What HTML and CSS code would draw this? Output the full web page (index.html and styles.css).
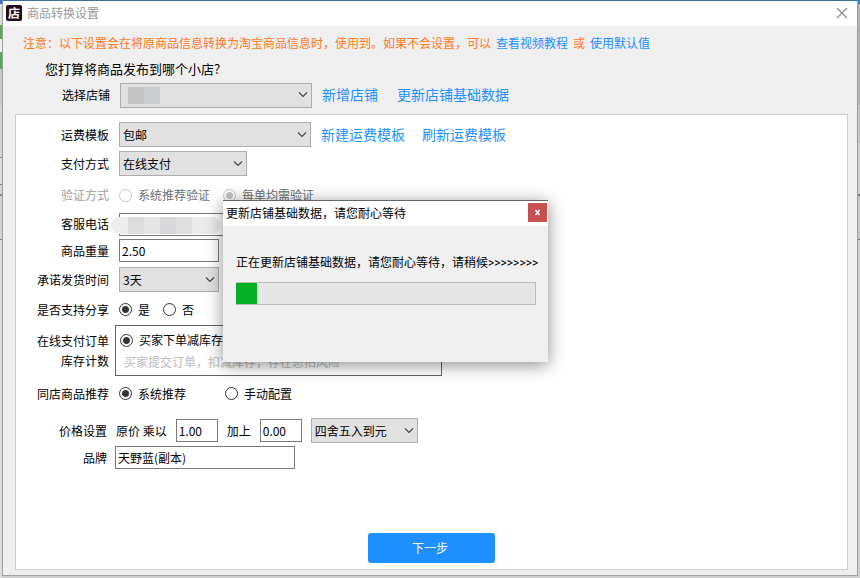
FILE: index.html
```html
<!DOCTYPE html>
<html lang="zh-CN">
<head>
    <meta charset="UTF-8">
    <meta name="viewport" content="width=device-width, initial-scale=1.0">
    <title>商品转换设置</title>
    <link rel="stylesheet" href="styles.css">
</head>
<body>

<div class="window">
    <header class="titlebar">
        <span class="logo">店</span>
        <h1>商品转换设置</h1>
        <button type="button" class="window-close" aria-label="关闭">
            <svg width="12" height="12" viewBox="0 0 12 12"><path d="M1 1l10 10M11 1L1 11" fill="none" stroke="#8c8c8c" stroke-width="1.2"/></svg>
        </button>
    </header>

    <p class="notice">
        <span>注意：以下设置会在将原商品信息转换为淘宝商品信息时，使用到。如果不会设置，可以</span>
        <a href="#">查看视频教程</a>
        <span>或</span>
        <a href="#">使用默认值</a>
    </p>
    <h2 class="question">您打算将商品发布到哪个小店?</h2>

    <div class="shop-row">
        <label class="row-label" for="shop">选择店铺</label>
        <div class="masked">
            <select id="shop" class="w-large"><option value=""></option></select>
            <span class="mosaic mosaic-shop"></span>
        </div>
        <a href="#" class="link">新增店铺</a>
        <a href="#" class="link link-wide">更新店铺基础数据</a>
    </div>

    <form class="panel">
        <div class="row">
            <label class="row-label" for="freight">运费模板</label>
            <select id="freight" class="w-large"><option>包邮</option></select>
            <a href="#" class="link">新建运费模板</a>
            <a href="#" class="link">刷新运费模板</a>
        </div>
        <div class="row">
            <label class="row-label" for="payment">支付方式</label>
            <select id="payment" class="w-medium"><option>在线支付</option></select>
        </div>
        <div class="row row-verify">
            <span class="row-label muted">验证方式</span>
            <label class="radio"><input type="radio" name="verify" disabled>系统推荐验证</label>
            <label class="radio"><input type="radio" name="verify" checked disabled>每单均需验证</label>
        </div>
        <div class="row row-phone">
            <label class="row-label" for="phone">客服电话</label>
            <div class="masked">
                <input type="text" id="phone" class="w-large">
                <span class="mosaic mosaic-phone"></span>
            </div>
        </div>
        <div class="row">
            <label class="row-label" for="weight">商品重量</label>
            <input type="text" id="weight" class="w-small" value="2.50">
        </div>
        <div class="row">
            <label class="row-label" for="ship-time">承诺发货时间</label>
            <select id="ship-time" class="w-small"><option>3天</option></select>
        </div>
        <div class="row row-share">
            <span class="row-label">是否支持分享</span>
            <label class="radio"><input type="radio" name="share" checked>是</label>
            <label class="radio"><input type="radio" name="share">否</label>
        </div>
        <div class="row row-stock">
            <span class="row-label">在线支付订单<br>库存计数</span>
            <div class="stock-box">
                <label class="radio"><input type="radio" name="stock" checked>买家下单减库存</label>
                <p>买家提交订单，扣减库存，存在恶拍风险</p>
            </div>
        </div>
        <div class="row row-recommend">
            <span class="row-label">同店商品推荐</span>
            <label class="radio"><input type="radio" name="recommend" checked>系统推荐</label>
            <label class="radio"><input type="radio" name="recommend">手动配置</label>
        </div>
        <div class="row row-near row-price">
            <span class="row-label">价格设置</span>
            <div class="price-fields">
                <label for="multiply">原价 乘以</label>
                <input type="text" id="multiply" class="w-price" value="1.00">
                <label for="plus">加上</label>
                <input type="text" id="plus" class="w-price" value="0.00">
                <select class="w-round" aria-label="取整方式"><option>四舍五入到元</option></select>
            </div>
        </div>
        <div class="row row-near row-brand">
            <label class="row-label" for="brand">品牌</label>
            <input type="text" id="brand" class="w-brand" value="天野蓝(副本)">
        </div>
        <button type="button" class="next">下一步</button>
    </form>
</div>

<div class="dialog" role="dialog" aria-labelledby="dialog-title">
    <div class="dialog-title">
        <h2 id="dialog-title">更新店铺基础数据，请您耐心等待</h2>
        <button type="button" class="dialog-close" aria-label="关闭">
            <svg width="7" height="7" viewBox="0 0 7 7"><path d="M1.5 1l4 5M5.5 1l-4 5" fill="none" stroke="#fff" stroke-width="1.5"/></svg>
        </button>
    </div>
    <div class="dialog-body">
        <label for="progress">正在更新店铺基础数据，请您耐心等待，请稍候&gt;&gt;&gt;&gt;&gt;&gt;&gt;&gt;</label>
        <progress id="progress" value="7" max="100"></progress>
    </div>
</div>

</body>
</html>
```

FILE: styles.css
```css
* {
    box-sizing: border-box;
}
body {
    margin: 0;
    padding: 0 2px 2px;
    min-height: 100vh;
    display: flex;
    font-family: "Noto Sans CJK SC", sans-serif;
    font-size: 12px;
    line-height: 20px;
    color: #000;
    /* strips of the page that lies behind the window */
    background:
        linear-gradient(#2f6fe0 4px, #dcdcdc 4px 25px, #4caf50 25px 39px, #f0f0f0 39px 52px, #4caf50 52px 69px, #c8c8c8 69px 105px, #d4d4d4 105px 157px, #888 157px 158px, #dcdcdc 158px 184px, #888 184px 185px, #d4d4d4 185px 194px, #888 194px 196px, #d0d0d0 196px 239px, #888 239px 240px, #dcdcdc 240px) left / 2px 100% no-repeat,
        linear-gradient(#1e90dc 4px, #b4b4b4 4px 105px, #c4c4c4 105px 143px, #d0d0d0 143px 194px, #777 194px 196px, #c8c8c8 196px 239px, #777 239px 240px, #d0d0d0 240px) right / 2px 100% no-repeat,
        #cfcfcf;
}
h1, h2, p {
    margin: 0;
    font-size: 12px;
    font-weight: normal;
}
a {
    color: #1e90ff;
    text-decoration: none;
}
button {
    padding: 0;
    border: none;
    font-family: inherit;
    cursor: pointer;
}
.window {
    flex: 1;
    display: flex;
    flex-direction: column;
    background: #efefef;
    border: 1px solid #a0a0a0;
    border-top-color: #3b6ea5;
}

.titlebar {
    display: flex;
    align-items: center;
    height: 25px;
    padding: 0 9px 1px 3px;
    background: #fff;
}
.titlebar h1 {
    flex: 1;
    margin-left: 5px;
    color: #999;
}
.logo {
    width: 16px;
    height: 16px;
    border-radius: 2px;
    background: #210b1b;
    color: #fff;
    font-weight: bold;
    line-height: 16px;
    text-align: center;
}
.window-close {
    display: flex;
    background: none;
}

.notice {
    display: flex;
    align-items: center;
    gap: 5px;
    height: 34px;
    padding-left: 20px;
    color: #ff7a21;
}
.question {
    padding-left: 42px;
    font-size: 13px;
    line-height: 18px;
}
.shop-row {
    display: flex;
    align-items: center;
    gap: 10px;
    height: 36px;
    padding: 0 0 2px 14px;
}

.panel {
    flex: 1;
    display: flex;
    flex-direction: column;
    margin: 0 9px 5px 12px;
    padding: 5px 0 6px;
    background: #fff;
    border: 1px solid #ccc;
}
.row {
    display: flex;
    align-items: center;
    gap: 10px;
    min-height: 29px;
}
.row-label {
    width: 93px;
    text-align: right;
}
.muted {
    color: #a0a0a0;
}
.link {
    font-size: 14px;
    line-height: 18px;
    padding-bottom: 2px;
}
.link + .link {
    margin-left: 7px;
}
.shop-row .link-wide {
    margin-left: 9px;
}
.row-verify {
    min-height: 34px;
}
.row-phone {
    min-height: 24px;
}
.row-share {
    min-height: 31px;
}
.row-share .radio + .radio {
    margin-left: 3px;
}
.row-verify .radio + .radio {
    margin-left: 3px;
}
.row-stock {
    gap: 6px;
}
.row-recommend {
    min-height: 35px;
}
.row-recommend .radio + .radio {
    margin-left: 29px;
}
/* rows whose controls start a little further left */
.row-near {
    gap: 8px;
}
.row-near .row-label {
    width: 91px;
}
.row-price {
    margin-top: 7px;
    min-height: 25px;
}
.price-fields {
    display: flex;
    align-items: center;
    gap: 9px;
    padding-left: 1px;
}
.row-brand {
    margin-top: 3px;
    min-height: 23px;
}

select, input[type="text"] {
    font-family: inherit;
    font-size: 12px;
    color: #000;
    border-radius: 0;
}
select {
    appearance: none;
    height: 25px;
    padding: 0 20px 0 3px;
    border: 1px solid #adadad;
    background: #e1e1e1 url("data:image/svg+xml,%3Csvg xmlns='http://www.w3.org/2000/svg' width='10' height='6'%3E%3Cpath d='M1 .5l4 4 4-4' fill='none' stroke='%23444' stroke-width='1.1'/%3E%3C/svg%3E") right 3px center no-repeat;
}
input[type="text"] {
    height: 23px;
    padding: 0 2px;
    border: 1px solid #7a7a7a;
    background: #fff;
}
.w-large {
    width: 192px;
}
.w-medium {
    width: 128px;
}
.w-small {
    width: 100px;
}
.w-price {
    width: 42px;
}
.w-round {
    width: 107px;
}
.w-brand {
    width: 180px;
}

.radio {
    display: flex;
    align-items: center;
    gap: 6px;
}
.radio input {
    appearance: none;
    width: 13px;
    height: 13px;
    margin: 0;
    border: 1px solid #333;
    border-radius: 50%;
    background: #fff;
}
.radio input:checked {
    background: radial-gradient(circle, #333 3px, #fff 4px);
}
.radio:has(input:disabled) {
    color: #6d6d6d;
}
.radio input:disabled {
    border-color: #c4c4c4;
}
.radio input:disabled:checked {
    background: radial-gradient(circle, #c4c4c4 3px, #fff 4px);
}

.stock-box {
    width: 327px;
    height: 51px;
    padding: 4px;
    border: 1px solid #646464;
}
.stock-box p {
    padding-left: 4px;
    color: #bbb;
    line-height: 24px;
}

.masked {
    position: relative;
    display: flex;
}
.mosaic {
    position: absolute;
}
.mosaic-shop {
    left: 8px;
    top: 4px;
    width: 32px;
    height: 17px;
    background: linear-gradient(to right, #c3c3c3 50%, #cccdd0 50%);
}
.mosaic-phone {
    left: -8px;
    top: 4px;
    width: 109px;
    height: 17px;
    border-radius: 8px;
    background: linear-gradient(to right, #ededed 17px, #dcdcdc 17px 33px, #e6e6e6 33px 49px, #d9d9db 49px 65px, #e0e0e0 65px 81px, #ebebeb 81px);
}

.next {
    align-self: center;
    width: 127px;
    height: 30px;
    margin-top: auto;
    padding: 0 3px 2px 0;
    border-radius: 3px;
    background: #1e90ff;
    color: #fff;
    font-size: 12px;
}

.dialog {
    position: absolute;
    left: 223px;
    top: 200px;
    width: 325px;
    height: 162px;
    background: #f0f0f0;
    border-top: 1px solid #666;
    box-shadow: 0 3px 16px rgba(0, 0, 0, 0.45);
}
.dialog-title {
    display: flex;
    align-items: center;
    justify-content: space-between;
    height: 25px;
    padding: 0 1px 2px 3px;
    background: #fff;
}
.dialog-close {
    display: flex;
    align-items: center;
    justify-content: center;
    width: 19px;
    height: 19px;
    background: #c75050;
}
.dialog-body {
    display: flex;
    flex-direction: column;
    gap: 9px;
    padding: 27px 12px 0 13px;
}
.dialog-body label {
    font-family: Roboto, "Noto Sans CJK SC", sans-serif;
    white-space: nowrap;
}
progress {
    appearance: none;
    width: 100%;
    height: 23px;
    border: 1px solid #bcbcbc;
    border-left: none;
}
progress::-webkit-progress-bar {
    background: #e6e6e6;
}
progress::-webkit-progress-value {
    background: #06b025;
}
```
